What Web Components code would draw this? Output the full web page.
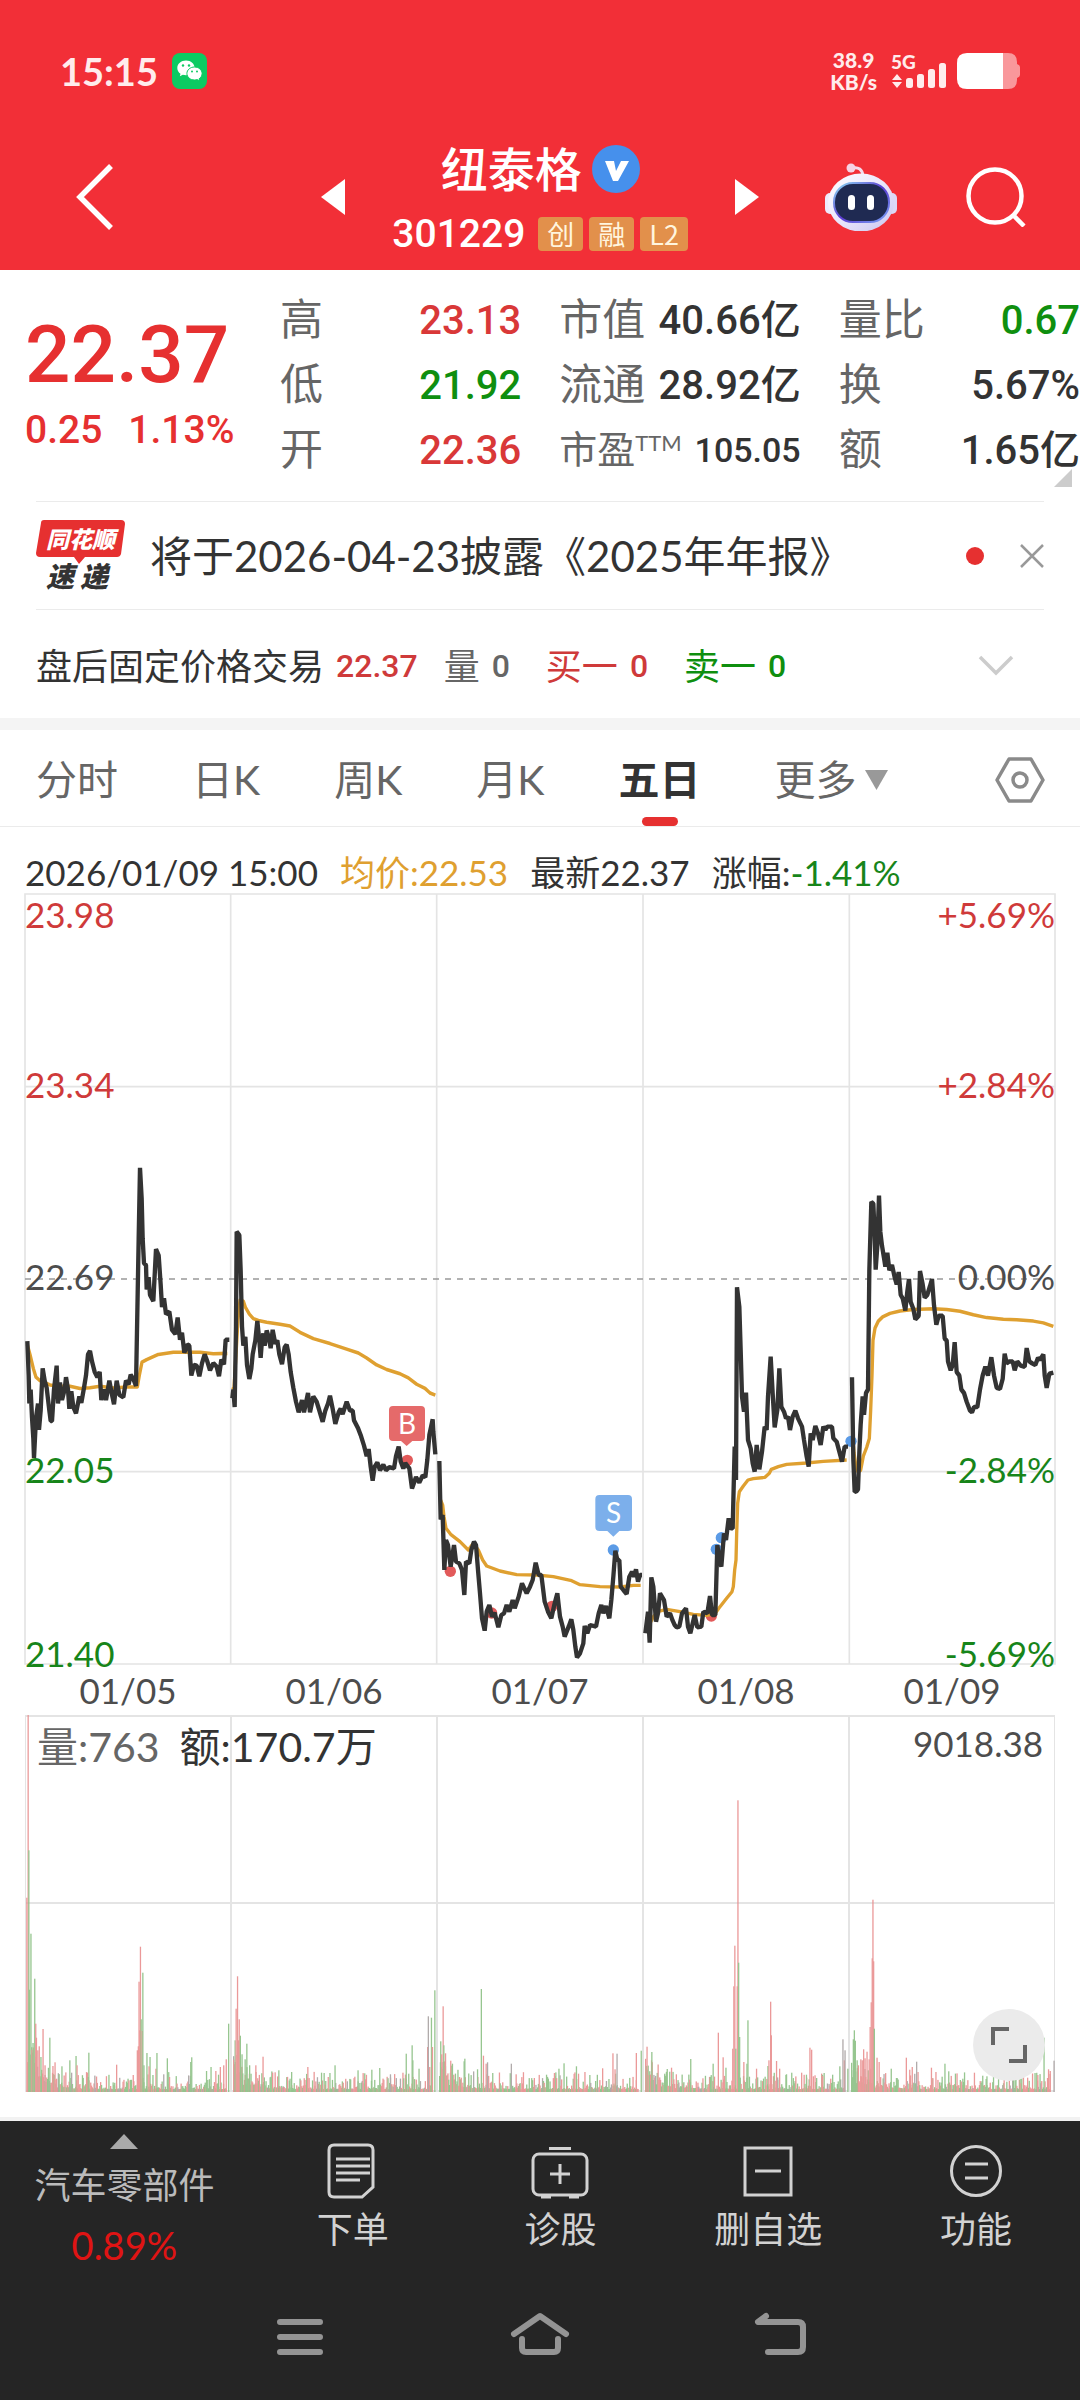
<!DOCTYPE html>
<html lang="zh-CN">
<head>
<meta charset="utf-8">
<meta name="viewport" content="width=device-width, initial-scale=1">
<title>纽泰格 301229</title>
<style>
  body {
    margin: 0;
    background: #252525;
    color: #333;
    font-family: Lato, "Noto Sans CJK SC", sans-serif;
    --num: Roboto, "Noto Sans CJK SC", sans-serif;
    --red: #e63030;
    --green: #0f8f0f;
    --line: #ebebeb;
  }
</style>
</head>
<body>
<stock-page></stock-page>

<script>
const reset = `
  * { box-sizing: border-box; }
  button { border: 0; padding: 0; margin: 0; background: none; color: inherit; font: inherit; cursor: pointer; }
  svg { display: block; flex: none; }
`

class BaseElement extends HTMLElement {
  constructor() {
    super()
    this.attachShadow({ mode: 'open' })
  }

  connectedCallback() {
    const template = document.createElement('template')
    template.innerHTML = `<style>${reset}${this.getStyles()}</style>${this.getTemplate()}`
    this.shadowRoot.replaceChildren(template.content.cloneNode(true))
  }
}

class StatusBar extends BaseElement {
  getStyles() {
    return `
      :host {
        display: flex;
        align-items: center;
        height: 142px;
        padding: 0 60px;
        background: #f22f37;
        color: #ffecec;
      }
      .time { font-size: 38px; line-height: 42px; font-weight: 700; margin-right: 14px; }
      .speed {
        margin-left: auto;
        margin-right: 14px;
        text-align: center;
        font-size: 21px;
        line-height: 22px;
        font-weight: 900;
      }
      .signal { margin-right: 10px; font-size: 19px; line-height: 20px; font-weight: 900; }
    `
  }
  getTemplate() {
    return `
      <div class="time">15:15</div>
      <svg width="35" height="36" viewBox="0 0 35 36">
        <rect width="35" height="36" rx="8" fill="#0ccb62"/>
        <path fill="#fff" d="M14 7.500c-4.900 0-8.700 3.300-8.700 7.500 0 2.400 1.200 4.400 3.200 5.800l-.7 2.400 3-1.500c1 .3 2 .5 3.200.5 4.900 0 8.700-3.200 8.700-7.200s-3.800-7.500-8.700-7.500z"/>
        <path fill="#fff" stroke="#0ccb62" d="M22.500 14c-4.200 0-7.600 2.900-7.600 6.500s3.400 6.500 7.600 6.500c1 0 1.900-.1 2.700-.4l2.500 1.400-.6-2.200c1.800-1.200 3-3.100 3-5.300 0-3.600-3.400-6.500-7.600-6.500z"/>
        <g fill="#0ccb62"><circle cx="11" cy="12.500" r="1.200"/><circle cx="17" cy="12.500" r="1.200"/><circle cx="20" cy="18.500" r="1"/><circle cx="25" cy="18.500" r="1"/></g>
      </svg>
      <div class="speed">38.9<br>KB/s</div>
      <div class="signal">
        <div>5G</div>
        <svg width="56" height="18" viewBox="0 0 56 18" overflow="visible">
          <g fill="#ffecec">
            <path d="M1 8l5-6 5 6zM1 10l5 6 5-6z"/>
            <rect x="15" y="6" width="7" height="10" rx="2.500"/>
            <rect x="26" y="2" width="7" height="14" rx="2.500"/>
            <rect x="37" y="-3" width="7" height="19" rx="2.500"/>
            <rect x="48" y="-9" width="7" height="25" rx="2.500"/>
          </g>
        </svg>
      </div>
      <svg width="63" height="36" viewBox="0 0 63 36">
        <path fill="#f9979b" d="M44 0h7q9 0 9 9v2q3 1 3 3v8q0 2-3 3v2q0 9-9 9h-7z"/>
        <path fill="#fff" d="M46 0H10Q0 0 0 10v16q0 10 10 10h36z"/>
      </svg>
    `
  }
}

class StockHeader extends BaseElement {
  getStyles() {
    return `
      :host {
        display: flex;
        align-items: center;
        padding: 0 54px 18px 76px;
        background: #f22f37;
        color: #fff;
      }
      .prev { margin-left: auto; }
      .title { margin: 0 47px; }
      .row { display: flex; align-items: center; justify-content: center; }
      h1 { margin: 0 10px 0 0; font-size: 47px; line-height: 54px; font-weight: 500; }
      .code { margin-top: 20px; height: 36px; gap: 6px; }
      .number { margin-right: 7px; font: 500 39px/36px var(--num); }
      .tag {
        height: 34px;
        padding: 0 9px;
        border-radius: 4px;
        background: #e2904b;
        color: #fff5df;
        font: 27px/33px "Noto Sans CJK SC", sans-serif;
      }
      .robot { margin: 0 69px 0 66px; }
    `
  }
  getTemplate() {
    return `
      <button aria-label="返回"><svg width="38" height="66" viewBox="0 0 38 66"><path d="M35 2L4 33l31 31" fill="none" stroke="#fff" stroke-width="5.500"/></svg></button>
      <button class="prev" aria-label="上一只"><svg width="24" height="36" viewBox="0 0 24 36"><path d="M24 0v36L0 18z" fill="#fff"/></svg></button>
      <div class="title">
        <div class="row">
          <h1>纽泰格</h1>
          <svg width="48" height="48" viewBox="0 0 48 48"><circle cx="24" cy="24" r="24" fill="#4690ec"/><path d="M13 16h9l2 10 5-10h8L26 36h-5z" fill="#fff"/></svg>
        </div>
        <div class="row code">
          <span class="number">301229</span>
          <span class="tag">创</span><span class="tag">融</span><span class="tag">L2</span>
        </div>
      </div>
      <button aria-label="下一只"><svg width="24" height="36" viewBox="0 0 24 36"><path d="M0 0v36l24-18z" fill="#fff"/></svg></button>
      <button class="robot" aria-label="智能助手">
        <svg width="72" height="68" viewBox="0 0 72 68">
          <defs>
            <linearGradient id="shell" x1="0" y1="0" x2="1" y2="1"><stop offset="0" stop-color="#fff"/><stop offset=".5" stop-color="#eae6fb"/><stop offset="1" stop-color="#c9c6f0"/></linearGradient>
            <linearGradient id="rim" x1="0" y1="0" x2="1" y2="1"><stop offset="0" stop-color="#8fe0f5"/><stop offset=".5" stop-color="#5a3ad0"/><stop offset="1" stop-color="#7aa4f5"/></linearGradient>
          </defs>
          <path d="M27 5q10-2 11 8" fill="none" stroke="#f4dcec" stroke-width="3"/>
          <circle cx="26" cy="5" r="4.500" fill="#f6d3e4"/>
          <rect x="0" y="30" width="10" height="21" rx="5" fill="#eeeafc"/>
          <rect x="62" y="30" width="10" height="21" rx="5" fill="#dcd8f6"/>
          <ellipse cx="36" cy="39.500" rx="33" ry="29" fill="url(#shell)"/>
          <rect x="9" y="20" width="55" height="39" rx="19" fill="#1f2a52" stroke="url(#rim)" stroke-width="2"/>
          <rect x="23" y="32" width="7" height="15" rx="3.500" fill="#fff"/>
          <rect x="42" y="32" width="7" height="15" rx="3.500" fill="#fff"/>
        </svg>
      </button>
      <button aria-label="搜索"><svg width="60" height="60" viewBox="0 0 60 60"><g fill="none" stroke="#fff" stroke-width="4.500"><circle cx="29" cy="29" r="26.500"/><path d="M47 48l11 11"/></g></svg></button>
    `
  }
}

class QuotePanel extends BaseElement {
  getStyles() {
    return `
      :host {
        position: relative;
        display: grid;
        grid-template-columns: 217px 1fr 1fr 1fr;
        column-gap: 38px;
        padding: 18px 0 18px 25px;
        font-family: var(--num);
      }
      .last { color: var(--red); font-weight: 500; white-space: nowrap; }
      .price { padding-top: 27px; font-size: 80px; line-height: 80px; }
      .change { margin-top: 11px; display: flex; gap: 26px; font-size: 39px; line-height: 48px; }
      dl { margin: 0; }
      dl div { display: flex; justify-content: space-between; align-items: center; height: 65px; white-space: nowrap; }
      dt { color: #666; font-size: 43px; line-height: 65px; }
      dd { margin: 0; font-size: 40px; line-height: 65px; font-weight: 500; }
      .small dt { font-size: 38px; }
      .small dd { font-size: 34px; }
      sup { font: 22px/22px Lato, sans-serif; vertical-align: 12px; }
      .up { color: #d93838; }
      .down { color: var(--green); }
      .corner { position: absolute; right: 8px; bottom: 14px; }
    `
  }
  getTemplate() {
    return `
      <div class="last">
        <div class="price">22.37</div>
        <div class="change"><span>0.25</span><span>1.13%</span></div>
      </div>
      <dl>
        <div><dt>高</dt><dd class="up">23.13</dd></div>
        <div><dt>低</dt><dd class="down">21.92</dd></div>
        <div><dt>开</dt><dd class="up">22.36</dd></div>
      </dl>
      <dl>
        <div><dt>市值</dt><dd>40.66亿</dd></div>
        <div><dt>流通</dt><dd>28.92亿</dd></div>
        <div class="small"><dt>市盈<sup>TTM</sup></dt><dd>105.05</dd></div>
      </dl>
      <dl>
        <div><dt>量比</dt><dd class="down">0.67</dd></div>
        <div><dt>换</dt><dd>5.67%</dd></div>
        <div><dt>额</dt><dd>1.65亿</dd></div>
      </dl>
      <svg class="corner" width="18" height="18" viewBox="0 0 18 18"><path d="M18 0v18H0z" fill="#ccc"/></svg>
    `
  }
}

class NoticeRow extends BaseElement {
  getStyles() {
    return `
      :host {
        display: flex;
        align-items: center;
        height: 109px;
        margin: 0 36px;
        border-top: 1px solid var(--line);
        border-bottom: 1px solid var(--line);
      }
      p { margin: 0 auto 0 25px; font-size: 42px; line-height: 56px; white-space: nowrap; }
      .dot { width: 18px; height: 18px; margin-right: 36px; border-radius: 50%; background: var(--red); }
      text { font-family: "Noto Sans CJK SC", sans-serif; font-weight: 900; font-style: italic; }
    `
  }
  getTemplate() {
    return `
      <svg width="89" height="80" viewBox="0 -4 89 80">
        <path d="M8 0h77q4 0 4 4l-4 30q-1 3-4 3H49l-6 7-5-7H4q-4 0-4-4L5 3q0-3 3-3z" fill="#e63030"/>
        <text x="10" y="28" font-size="23" fill="#fff">同花顺</text>
        <text x="10" y="67" font-size="28" fill="#333">速</text>
        <text x="44" y="67" font-size="28" fill="#333">递</text>
      </svg>
      <p>将于2026-04-23披露《2025年年报》</p>
      <span class="dot"></span>
      <button aria-label="关闭"><svg width="24" height="24" viewBox="0 0 24 24"><path d="M1 1l22 22M23 1L1 23" stroke="#999" stroke-width="2.500"/></svg></button>
    `
  }
}

class AfterHours extends BaseElement {
  getStyles() {
    return `
      :host {
        display: flex;
        align-items: center;
        height: 120px;
        padding: 3px 66px 0 36px;
        border-bottom: 12px solid #f4f4f4;
        font-size: 36px;
        line-height: 48px;
        white-space: nowrap;
        box-sizing: border-box;
      }
      .item { display: flex; gap: 12px; margin-right: 36px; }
      .first { margin-right: 26px; }
      b { font: 500 32px/48px var(--num); }
      .gray { color: #666; }
      .up { color: #cf3a3a; }
      .down { color: var(--green); }
      button { margin-left: auto; }
    `
  }
  getTemplate() {
    return `
      <span class="item first">盘后固定价格交易<b class="up">22.37</b></span>
      <span class="item gray">量<b>0</b></span>
      <span class="item up">买一<b>0</b></span>
      <span class="item down">卖一<b>0</b></span>
      <button aria-label="展开"><svg width="36" height="22" viewBox="0 0 36 22"><path d="M2 2l16 16L34 2" fill="none" stroke="#ccc" stroke-width="3.500"/></svg></button>
    `
  }
}

class PeriodTabs extends BaseElement {
  getStyles() {
    return `
      :host {
        display: flex;
        align-items: center;
        gap: 74px;
        padding: 0 35px 0 36px;
        border-bottom: 1px solid var(--line);
        color: #666;
        font-size: 41px;
      }
      button { position: relative; padding-top: 3px; line-height: 93px; white-space: nowrap; }
      .active { color: #333; font-weight: 700; }
      .active::after {
        content: "";
        position: absolute;
        left: 50%;
        bottom: 0;
        width: 36px;
        height: 9px;
        margin-left: -18px;
        border-radius: 5px;
        background: var(--red);
      }
      .more { display: flex; align-items: center; gap: 8px; }
      .settings { margin-left: auto; }
    `
  }
  getTemplate() {
    return `
      <button>分时</button>
      <button>日K</button>
      <button>周K</button>
      <button>月K</button>
      <button class="active">五日</button>
      <button class="more">更多<svg width="23" height="20" viewBox="0 0 23 20"><path d="M0 0h23L11.500 20z" fill="#999"/></svg></button>
      <button class="settings" aria-label="设置">
        <svg width="50" height="48" viewBox="0 0 50 48"><g fill="none" stroke="#8a8a8a" stroke-width="3.500" stroke-linejoin="round"><path d="M14 3h22l12 21-12 21H14L2 24z"/><circle cx="25" cy="24" r="7"/></g></svg>
      </button>
    `
  }
}

// one polyline pair per trading day, three units per pixel
const sessions = [
  {
    at: 'translate(-75 708) scale(1 1.052)',
    average: '82,612 90,640 100,680 108,705 120,715 150,727 180,731 210,731 240,737 270,735 300,731 340,736 380,733 412,733 418,700 426,662 440,655 475,640 520,634 600,634 640,638 682,637',
    price: '82,602 86,700 88,780 92,740 96,820 100,880 102,935 108,820 114,780 117,855 122,800 128,680 134,715 140,735 148,800 152,830 156,830 162,740 170,672 174,780 180,720 186,770 194,740 198,705 204,740 208,795 214,745 220,790 228,808 238,760 244,778 252,735 258,700 264,640 270,630 276,660 284,690 292,705 299,690 304,770 312,740 318,770 328,715 336,755 342,782 350,715 358,755 370,762 378,715 386,725 392,698 400,710 408,730 416,310 420,108 425,195 428,310 432,380 438,385 440,455 446,420 450,470 460,488 468,340 476,358 482,440 486,505 492,480 498,525 508,518 516,570 526,582 533,535 540,598 546,578 553,635 562,612 568,615 574,700 582,670 590,672 598,702 606,665 614,640 622,660 630,685 640,665 650,675 657,702 664,655 672,668 677,598 688,598'
  },
  {
    at: 'translate(-75 708) scale(1 1.052)',
    average: '697,740 702,735 708,640 714,540 720,485 730,488 736,505 748,525 760,538 775,543 800,548 840,554 870,559 900,577 940,595 990,609 1040,625 1075,636 1100,650 1130,670 1160,683 1200,695 1225,707 1250,725 1275,737 1290,750 1306,756',
    price: '697,765 700,740 704,790 708,560 710,290 718,300 722,400 726,560 730,615 736,590 741,670 748,710 754,680 758,640 766,600 772,545 778,600 782,650 786,600 790,580 794,615 800,572 806,590 812,622 818,570 826,610 832,600 838,640 846,668 854,620 860,612 866,640 872,690 880,735 888,775 896,805 906,770 912,805 924,750 930,805 940,760 950,775 958,800 968,832 976,800 984,780 990,758 998,795 1006,838 1016,805 1022,795 1028,810 1040,775 1050,800 1058,800 1062,828 1074,850 1082,870 1092,900 1100,930 1106,910 1112,960 1118,1000 1124,960 1132,948 1140,970 1150,955 1158,970 1168,962 1182,965 1188,930 1196,903 1202,945 1210,965 1216,950 1228,965 1236,1022 1248,990 1258,1005 1268,985 1276,990 1282,940 1288,870 1298,825 1300,860 1306,925'
  },
  {
    at: 'translate(1185 918)',
    average: '62,900 68,915 72,950 78,985 92,1003 120,1025 145,1050 160,1030 175,1050 188,1080 200,1098 240,1113 290,1124 350,1125 400,1130 455,1142 480,1154 540,1160 600,1161 640,1156 662,1156',
    price: '58,783 62,958 68,945 73,1110 78,1020 84,1035 92,1100 102,1035 108,1085 118,1090 126,1110 133,1185 138,1085 148,1090 154,1050 162,1025 168,1035 174,1110 180,1180 186,1255 194,1292 200,1235 208,1215 216,1250 224,1238 235,1282 244,1245 252,1240 260,1215 268,1235 278,1200 284,1225 296,1190 306,1150 320,1180 330,1160 338,1140 347,1088 356,1125 364,1125 374,1205 384,1235 394,1255 404,1210 412,1180 420,1250 428,1280 434,1310 446,1280 454,1258 460,1290 466,1340 471,1372 480,1360 490,1330 494,1278 502,1300 510,1275 528,1280 536,1240 544,1215 550,1240 558,1218 568,1255 574,1200 580,1130 586,1052 592,1080 598,1080 602,1160 610,1170 620,1182 628,1130 636,1115 642,1130 648,1108 654,1145 660,1125 666,1125'
  },
  {
    at: 'translate(1185 918)',
    average: '680,1250 690,1270 700,1250 712,1235 740,1228 780,1235 820,1243 860,1246 886,1240 900,1220 920,1195 936,1175 940,1160 944,1110 948,1080 950,1000 953,910 958,875 970,858 984,840 1000,836 1035,832 1048,820 1054,808 1075,800 1100,793 1160,789 1210,784 1280,780',
    price: '676,1300 684,1235 689,1328 694,1132 700,1160 708,1265 714,1240 720,1180 732,1200 740,1250 750,1240 758,1262 764,1275 770,1282 778,1280 786,1240 798,1225 804,1280 811,1300 824,1245 832,1282 844,1280 850,1235 862,1240 870,1188 876,1245 886,1245 892,1035 898,1075 904,1100 912,1000 918,1020 926,955 932,985 938,985 944,740 948,840 951,262 958,320 962,450 966,590 972,635 978,578 984,720 992,745 998,790 1004,815 1010,735 1018,808 1026,755 1034,680 1040,690 1044,590 1052,470 1058,580 1064,682 1072,630 1078,505 1084,620 1092,635 1098,655 1104,650 1110,690 1118,650 1126,632 1134,655 1146,680 1152,720 1160,770 1166,800 1172,700 1178,720 1186,678 1194,700 1202,735 1210,680 1216,690 1222,680 1236,680 1240,715 1250,725 1258,755 1266,785 1274,740 1284,740'
  },
  {
    at: 'translate(2025 708) scale(1 1.052)',
    average: '458,870 462,920 468,960 474,975 482,970 490,930 500,905 508,880 512,800 516,700 519,600 525,565 535,545 548,533 570,523 600,516 640,512 700,510 740,512 780,517 820,527 860,535 910,540 950,541 1000,545 1030,550 1060,560',
    price: '456,705 460,940 464,1032 470,1030 474,1025 478,920 482,840 488,760 492,812 498,750 504,740 508,400 514,205 520,210 524,300 527,398 532,330 537,187 541,290 546,330 552,365 556,390 562,350 568,400 576,385 584,420 590,440 596,405 602,470 608,480 616,515 622,460 627,425 632,490 640,510 646,540 656,530 660,402 668,440 674,478 682,470 690,445 696,425 702,500 709,555 716,530 728,530 734,595 740,600 744,660 752,685 758,670 764,605 770,690 778,700 784,740 792,750 800,775 810,800 816,805 822,790 832,790 840,740 848,700 856,675 864,700 874,648 882,700 890,735 900,738 908,710 914,638 920,665 928,660 938,660 944,685 952,660 962,672 974,675 980,622 988,660 996,665 1006,670 1014,650 1020,655 1030,640 1034,700 1040,735 1048,695 1060,692'
  }
]

const trades = [
  [1147, 1699, 'buy'], [1276, 2032, 'buy'], [1400, 2157, 'buy'], [1581, 2137, 'buy'], [2059, 2166, 'buy'],
  [1765, 1968, 'sell'], [2074, 1966, 'sell'], [2089, 1931, 'sell'], [2478, 1642, 'sell']
]

class PriceChart extends BaseElement {
  getStyles() {
    return `
      :host { display: block; padding: 23px 25px 0; font-size: 35px; }
      .info { display: flex; gap: 22px; line-height: 44px; white-space: nowrap; }
      .avg { color: #dfa030; }
      .plot { position: relative; }
      .plot > svg { width: 100%; height: auto; overflow: visible; }
      .grid { fill: none; stroke: #e4e4e4; stroke-width: 5; }
      .base { stroke: #999; stroke-width: 5; stroke-dasharray: 18 18; }
      .average { fill: none; stroke: #dfa030; stroke-width: 10; stroke-linejoin: round; }
      .price { fill: none; stroke: #333; stroke-width: 13; stroke-linejoin: bevel; }
      .buy { fill: #e25a5a; }
      .sell { fill: #5b9be6; }
      .flag { fill: #fff; font-size: 84px; text-anchor: middle; }
      .label { position: absolute; left: 0; right: 0; height: 40px; margin-top: -23px; display: flex; justify-content: space-between; line-height: 40px; color: #4d4d4d; }
      .up { color: #cf3a3a; }
      .down { color: #17851a; }
      .dates { display: grid; grid-template-columns: repeat(5, 1fr); padding: 3px 0 2px; line-height: 46px; text-align: center; color: #4d4d4d; }
    `
  }
  getTemplate() {
    const labels = [
      ['3%', 'up', '23.98', '+5.69%'],
      ['25%', 'up', '23.34', '+2.84%'],
      ['50%', '', '22.69', '0.00%'],
      ['75%', 'down', '22.05', '-2.84%'],
      ['99%', 'down', '21.40', '-5.69%']
    ]
    const lines = sessions.map(s => `
      <g transform="${s.at}">
        <polyline class="average" points="${s.average}"/>
        <polyline class="price" points="${s.price}"/>
      </g>`).join('')
    const dots = trades.map(([x, y, side]) => `<circle class="${side}" cx="${x}" cy="${y}" r="17"/>`).join('')
    return `
      <div class="info">
        <span>2026/01/09 15:00</span>
        <span class="avg">均价:22.53</span>
        <span>最新22.37</span>
        <span>涨幅:<span class="down">-1.41%</span></span>
      </div>
      <div class="plot">
        <svg viewBox="0 0 3090 2310">
          <path class="grid" d="M0 0H3090V2310H0zM0 578H3090M0 1733H3090M617 0V2310M1235 0V2310M1854 0V2310M2473 0V2310"/>
          <path class="base" d="M0 1155H3090"/>
          ${dots}
          ${lines}
          <path class="buy" opacity=".9" d="M1104 1536h84q12 0 12 12v81q0 12-12 12h-26l-17 15-17-15h-24q-12 0-12-12v-81q0-12 12-12z"/>
          <text class="flag" x="1146" y="1619">B</text>
          <path class="sell" opacity=".8" d="M1723 1803h86q12 0 12 12v84q0 12-12 12h-26l-18 17-18-17h-24q-12 0-12-12v-84q0-12 12-12z"/>
          <text class="flag" x="1766" y="1888">S</text>
        </svg>
        ${labels.map(([top, cls, left, right]) => `<div class="label ${cls}" style="top: ${top}"><span>${left}</span><span>${right}</span></div>`).join('')}
      </div>
      <div class="dates"><span>01/05</span><span>01/06</span><span>01/07</span><span>01/08</span><span>01/09</span></div>
    `
  }
}

const barColors = { r: '#e98f8f', g: '#8cc084', k: '#a9a2a2' }
// x offset of the group, then the tall bars as x,top,colour
const peaks = [
  [-25, '76,652,r 80,103,r 82,510,g 84,928,g 88,760,g 91,1108,r 94,1088,g 99,895,g 102,1030,r 104,1072,r 108,1110,r 112,1098,r 117,1130,g 123,1046,r 129,1155,r 143,1072,g 152,1157,r 158,1146,r 178,1158,g 201,1140,g 219,1127,g 222,1155,r 256,1117,g 337,1153,r 385,1184,r 397,1110,r 400,1098,r 402,904,r 404,1050,r 406,799,r 408,1017,g 411,1052,r 413,877,g 416,1155,g 425,1118,g 434,1130,g 431,1158,r 451,1165,r 454,1118,g 484,1134,g 555,1131,g 552,1145,g 598,1172,g 611,1160,g 625,1172,r 638,1160,r 648,1155,r 655,1137,r 662,1030,g 677,1138,r 681,1080,g 684,985,r 688,888,r 691,1080,r 693,1017,r 696,1066,g 701,1122,g 710,1137,g 715,1090,g 723,1155,g 741,1155,r 762,1129,r 808,1170,g 845,1175,g 892,1160,r 932,1177,g 971,1155,g 1038,1170,g 1078,1168,g 1101,1163,g 1132,1182,k 1178,1120,g 1195,1095,g 1197,1140,g 1215,1165,g 1240,1100,r 1242,1008,k 1246,1160,r 1251,1012,g 1254,1100,r 1261,930,g 1278,1083,g 1281,1122,r 1285,978,r 1287,1095,g 1292,1119,r 1307,1141,r 1312,1150,g 1346,1143,g 1348,1135,g 1385,1167,g 1396,926,g 1402,1126,r 1410,1150,r 1414,1146,k 1483,1150,k 1497,1182,r 1550,1193,r'],
  [515, '17,1183,g 40,1178,r 53,1165,g 68,1149,g 104,1158,g 110,1180,r 180,1164,r 210,1119,r 216,1167,r 222,1120,k 278,1118,r 292,1111,g 309,1099,r 322,1140,r 323,1115,g 360,1185,g 380,1162,r 436,1136,g 501,1150,g 516,1057,r 530,1131,r 538,1162,g 558,1105,r 561,918,r 564,796,r 567,1105,g 571,918,r 573,360,r 575,847,g 578,1070,g 590,1145,r 599,1150,g 602,1020,g 627,1165,r 660,1157,g 663,1140,r 668,964,r 670,1065,r 685,1142,r 694,1165,r 714,1182,g 772,1183,g 782,1102,r 787,1108,r 797,1185,r 819,1187,r 848,1183,g 869,1158,g 878,1077,k 882,1140,r 884,1110,k 892,1165,g 908,1077,g 911,1050,g 914,1081,g 919,1140,g 923,1155,r 930,1137,r 934,1140,r 938,1107,r 942,1134,r 948,1114,r 954,1137,r 957,1040,r 960,966,r 963,834,r 965,658,r 967,843,r 969,1045,g 977,1132,r 983,1145,r 1018,1165,g 1062,1132,r 1072,1168,r 1079,1160,r 1092,1144,k 1135,1162,r 1148,1175,r 1174,1150,g 1185,1173,g 1226,1195,g 1296,1188,g 1346,1187,r 1444,1184,r 1462,1072,g 1475,1167,r 1480,1172,r 1491,1141,k']
]

class VolumeChart extends BaseElement {
  getStyles() {
    return `
      :host { display: block; padding: 0 25px 25px; border-bottom: 4px solid #f2f2f2; }
      .plot { position: relative; }
      .plot > svg { width: 100%; height: auto; }
      .grid { fill: none; stroke: #e4e4e4; stroke-width: 2; }
      .head { position: absolute; top: 0; left: 12px; right: 12px; display: flex; gap: 20px; font-size: 41px; line-height: 64px; }
      .gray { color: #666; }
      .max { margin-left: auto; font-size: 35px; line-height: 56px; color: #4d4d4d; }
      button { position: absolute; right: 10px; bottom: 11px; width: 72px; height: 72px; border-radius: 50%; background: #ebebeb; display: grid; place-items: center; }
    `
  }
  getBars() {
    const bars = []
    let seed = 7
    const rand = () => (seed = (seed * 16807) % 2147483647) / 2147483647
    for (let day = 0; day < 5; day++) {
      for (let i = 0; i < 240; i++) {
        const open = Math.exp(-i / 16) * (day === 0 ? 34 : 20)
        const h = 3 + open * (0.4 + rand()) + Math.pow(rand(), 3) * 17
        const color = rand() < 0.08 ? 'k' : rand() < 0.5 ? 'r' : 'g'
        bars.push([day * 206 + 2 + i * 0.83, h, color])
      }
    }
    for (const [start, list] of peaks) {
      for (const item of list.split(' ')) {
        const [x, top, color] = item.split(',')
        bars.push([start + x / 2.904, (1235 - top) / 3, color])
      }
    }
    return bars.map(([x, h, c]) => `<rect x="${x.toFixed(1)}" y="${(377 - h).toFixed(1)}" width="1.300" height="${h.toFixed(1)}" fill="${barColors[c]}"/>`).join('')
  }
  getTemplate() {
    return `
      <div class="plot">
        <svg viewBox="0 0 1030 377">
          <path class="grid" d="M0 1H1030V376H0zM0 188H1030M206 0V377M412 0V377M618 0V377M824 0V377"/>
          <g opacity=".9">${this.getBars()}</g>
        </svg>
        <div class="head">
          <span class="gray">量:763</span><span>额:170.7万</span><span class="max">9018.38</span>
        </div>
        <button aria-label="全屏"><svg width="36" height="36" viewBox="0 0 36 36"><path d="M2 18V2h16M34 18v16H18" fill="none" stroke="#666" stroke-width="4"/></svg></button>
      </div>
    `
  }
}

class BottomBar extends BaseElement {
  getStyles() {
    return `
      :host {
        display: grid;
        grid-template-columns: 249fr 208fr 208fr 208fr 208fr;
        height: 169px;
        background: #252525;
        color: #d2d2d2;
        font-size: 36px;
        line-height: 48px;
      }
      button { display: flex; flex-direction: column; align-items: center; gap: 6px; padding-top: 22px; }
      .sector { gap: 12px; padding-top: 13px; color: #bbb; }
      .rate { color: #e01414; font-size: 38px; }
      g { fill: none; stroke: #d2d2d2; stroke-width: 3; }
    `
  }
  getTemplate() {
    return `
      <button class="sector">
        <svg width="28" height="15" viewBox="0 0 28 15"><path d="M14 0l14 15H0z" fill="#aaa"/></svg>
        <span>汽车零部件</span>
        <span class="rate">0.89%</span>
      </button>
      <button>
        <svg width="56" height="56" viewBox="0 0 56 56"><g><path d="M9 2h34q5 0 5 5v37L37 54H9q-5 0-5-5V7q0-5 5-5zM11 16h34M11 23h34M11 30h34M11 37h24"/></g></svg>
        <span>下单</span>
      </button>
      <button>
        <svg width="58" height="56" viewBox="0 0 58 56"><g><rect x="2" y="11" width="54" height="41" rx="6"/><path d="M18 5.500h22M19 31h20M29 21v20M10 54h10M38 54h10"/></g></svg>
        <span>诊股</span>
      </button>
      <button>
        <svg width="50" height="56" viewBox="0 0 50 56"><g><rect x="2" y="5" width="46" height="47"/><path d="M12 28h26"/></g></svg>
        <span>删自选</span>
      </button>
      <button>
        <svg width="54" height="56" viewBox="0 0 54 56"><g><circle cx="27" cy="28" r="24.500"/><path d="M16 21h23M16 35h23"/></g></svg>
        <span>功能</span>
      </button>
    `
  }
}

class SystemNav extends BaseElement {
  getStyles() {
    return `
      :host { display: grid; grid-template-columns: repeat(3, 1fr); padding: 22px 180px 40px; background: #252525; }
      button { display: flex; justify-content: center; }
      path { fill: none; stroke: #949494; stroke-width: 6; stroke-linecap: round; stroke-linejoin: round; }
    `
  }
  getTemplate() {
    return `
      <button aria-label="菜单"><svg width="60" height="48" viewBox="0 0 60 48"><path d="M10 10h40M10 25h40M10 40h40"/></svg></button>
      <button aria-label="主页"><svg width="60" height="48" viewBox="0 0 60 48"><path d="M4 22L30 4l26 18M12 27v9q0 4 4 4h28q4 0 4-4v-9"/></svg></button>
      <button aria-label="后退"><svg width="60" height="48" viewBox="0 0 60 48"><path d="M16 4L8 10h40q5 0 5 5v20q0 5-5 5H18"/></svg></button>
    `
  }
}

class StockPage extends BaseElement {
  getStyles() {
    return `
      :host { display: block; }
      main { background: #fff; }
    `
  }
  getTemplate() {
    return `
      <status-bar></status-bar>
      <stock-header></stock-header>
      <main>
        <quote-panel></quote-panel>
        <notice-row></notice-row>
        <after-hours></after-hours>
        <period-tabs></period-tabs>
        <price-chart></price-chart>
        <volume-chart></volume-chart>
      </main>
      <bottom-bar></bottom-bar>
      <system-nav></system-nav>
    `
  }
}

customElements.define('status-bar', StatusBar)
customElements.define('stock-header', StockHeader)
customElements.define('quote-panel', QuotePanel)
customElements.define('notice-row', NoticeRow)
customElements.define('after-hours', AfterHours)
customElements.define('period-tabs', PeriodTabs)
customElements.define('price-chart', PriceChart)
customElements.define('volume-chart', VolumeChart)
customElements.define('bottom-bar', BottomBar)
customElements.define('system-nav', SystemNav)
customElements.define('stock-page', StockPage)
</script>
</body>
</html>
